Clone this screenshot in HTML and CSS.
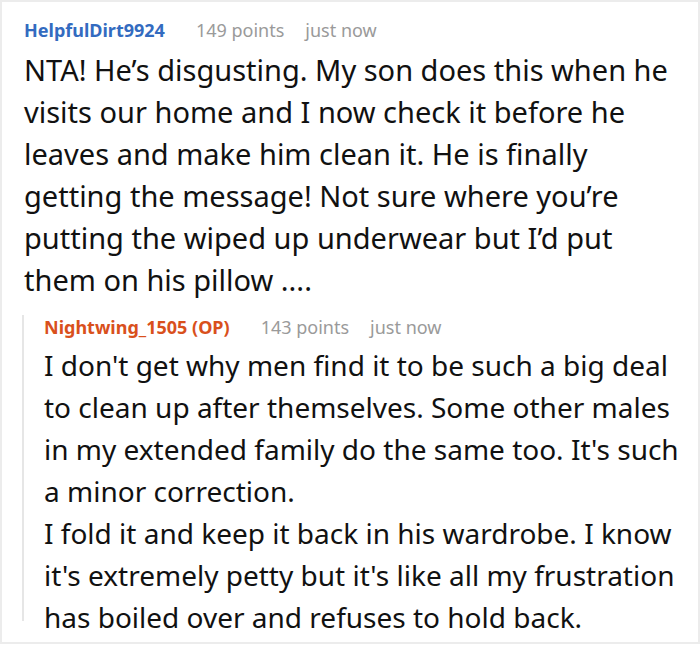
FILE: index.html
```html
<!DOCTYPE html>
<html>
<head>
<meta charset="utf-8">
<link rel="stylesheet" href="styles.css">
</head>
<body>
<div class="thread">
  <div class="comment">
    <div class="meta">
      <span class="user user-blue">HelpfulDirt9924</span>
      <span class="points">149 points</span>
      <span class="time">just now</span>
    </div>
    <p class="body">NTA! He’s disgusting. My son does this when he visits our home and I now check it before he leaves and make him clean it. He is finally getting the message! Not sure where you’re putting the wiped up underwear but I’d put them on his pillow ....</p>
    <div class="reply">
      <div class="meta">
        <span class="user user-op">Nightwing_1505 (OP)</span>
        <span class="points">143 points</span>
        <span class="time">just now</span>
      </div>
      <p class="body">I don't get why men find it to be such a big deal to clean up after themselves. Some other males in my extended family do the same too. It's such a minor correction.<br>I fold it and keep it back in his wardrobe. I know it's extremely petty but it's like all my frustration has boiled over and refuses to hold back.</p>
    </div>
  </div>
</div>
</body>
</html>
```
FILE: styles.css
```css
html, body {
  margin: 0;
  padding: 0;
  background: #fff;
}
body {
  font-family: "Noto Sans", "Open Sans", sans-serif;
  color: #111;
}
.thread {
  width: 700px;
  height: 644px;
  box-sizing: border-box;
  border: 2px solid #ececec;
  padding: 16px 14px 0 22px;
  overflow: hidden;
}
.meta {
  display: flex;
  align-items: baseline;
  font-size: 18px;
  line-height: 24px;
  white-space: nowrap;
}
.user {
  font-weight: 700;
  margin-right: 31px;
}
.user-blue { color: #336bc0; }
.user-op { color: #d9501c; }
.points, .time {
  color: #9a9a9a;
}
.time { margin-left: 21px; }
.body {
  margin: 7px 0 0 0;
  font-size: 29px;
  line-height: 42px;
}
.reply {
  margin: 24px 0 0 -2px;
  border-left: 2px solid #e6e6e6;
  padding-left: 20px;
  height: 306px;
}
.reply .meta {
  margin-top: -10px;
}
.reply .body {
  margin-top: 5px;
  font-size: 28px;
}
```
